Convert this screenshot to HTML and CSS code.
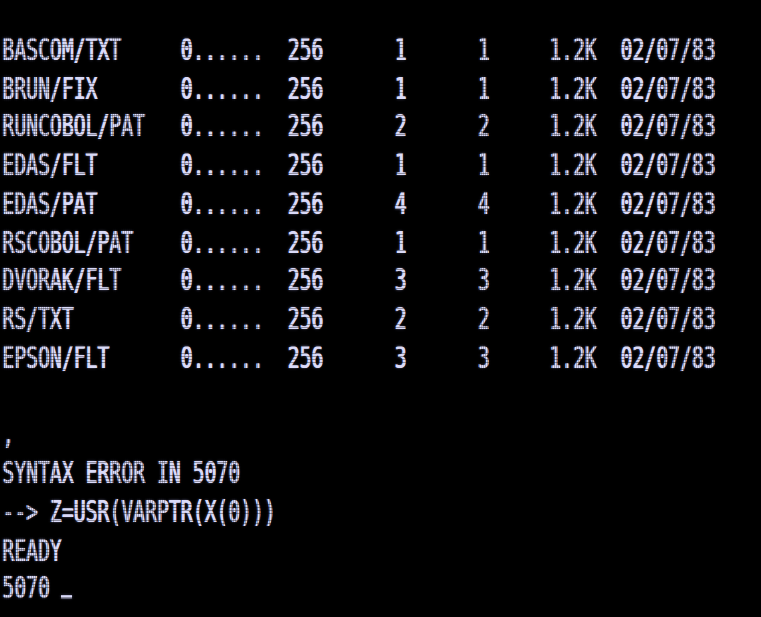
FILE: index.html
```html
<!DOCTYPE html>
<html lang="en">
<head>
<meta charset="utf-8">
<title>TRS-80 directory listing</title>
<link rel="stylesheet" href="styles.css">
</head>
<body>
<main class="screen">
  <div class="line"></div>
  <div class="dir">
    <div class="entry"><span>BASCOM/TXT</span><span>0......</span><span>256</span><span>1</span><span>1</span><span>1.2K</span><span>02/07/83</span></div>
    <div class="entry"><span>BRUN/FIX</span><span>0......</span><span>256</span><span>1</span><span>1</span><span>1.2K</span><span>02/07/83</span></div>
    <div class="entry"><span>RUNCOBOL/PAT</span><span>0......</span><span>256</span><span>2</span><span>2</span><span>1.2K</span><span>02/07/83</span></div>
    <div class="entry"><span>EDAS/FLT</span><span>0......</span><span>256</span><span>1</span><span>1</span><span>1.2K</span><span>02/07/83</span></div>
    <div class="entry"><span>EDAS/PAT</span><span>0......</span><span>256</span><span>4</span><span>4</span><span>1.2K</span><span>02/07/83</span></div>
    <div class="entry"><span>RSCOBOL/PAT</span><span>0......</span><span>256</span><span>1</span><span>1</span><span>1.2K</span><span>02/07/83</span></div>
    <div class="entry"><span>DVORAK/FLT</span><span>0......</span><span>256</span><span>3</span><span>3</span><span>1.2K</span><span>02/07/83</span></div>
    <div class="entry"><span>RS/TXT</span><span>0......</span><span>256</span><span>2</span><span>2</span><span>1.2K</span><span>02/07/83</span></div>
    <div class="entry"><span>EPSON/FLT</span><span>0......</span><span>256</span><span>3</span><span>3</span><span>1.2K</span><span>02/07/83</span></div>
  </div>
  <div class="line"></div>
  <div class="line">,</div>
  <div class="line">SYNTAX ERROR IN 5070</div>
  <div class="line">--&gt; Z=USR(VARPTR(X(0)))</div>
  <div class="line">READY</div>
  <div class="line">5070 <span class="cursor"></span></div>
</main>
</body>
</html>
```
FILE: styles.css
```css
html, body {
  margin: 0;
  padding: 0;
  background: #000;
  height: 100%;
  overflow: hidden;
}

body::after {
  content: "";
  position: fixed;
  inset: 0;
  pointer-events: none;
  background:
    repeating-linear-gradient(to bottom, transparent 0, transparent 2.4px, rgba(0,0,0,0.35) 2.4px, rgba(0,0,0,0.35) 3.214px),
    repeating-linear-gradient(to right, transparent 0, transparent 1.5px, rgba(0,0,0,0.25) 1.5px, rgba(0,0,0,0.25) 1.982px);
}

.screen {
  font-family: "DejaVu Sans Mono", "Liberation Mono", monospace;
  font-size: 19.75px;
  line-height: 24.78px;
  color: #dadaf8;
  text-shadow: 0.8px 0 0 #dadaf8, 0 0 2px rgba(190, 190, 255, 0.5);
  padding-left: 2px;
  transform-origin: 0 0;
  transform: translateY(-7px) scaleY(1.556);
}

.line {
  height: 24.78px;
  white-space: pre;
}

.dir {
  display: flex;
  flex-direction: column;
}

.entry {
  display: grid;
  grid-template-columns: 15ch 9ch 9ch 7ch 6ch 6ch auto;
  height: 24.78px;
  white-space: pre;
}

.cursor {
  display: inline-block;
  width: 0.85ch;
  height: 2px;
  background: #dadaf8;
  box-shadow: 0 0 2px rgba(190, 190, 255, 0.5);
  vertical-align: baseline;
}
```
